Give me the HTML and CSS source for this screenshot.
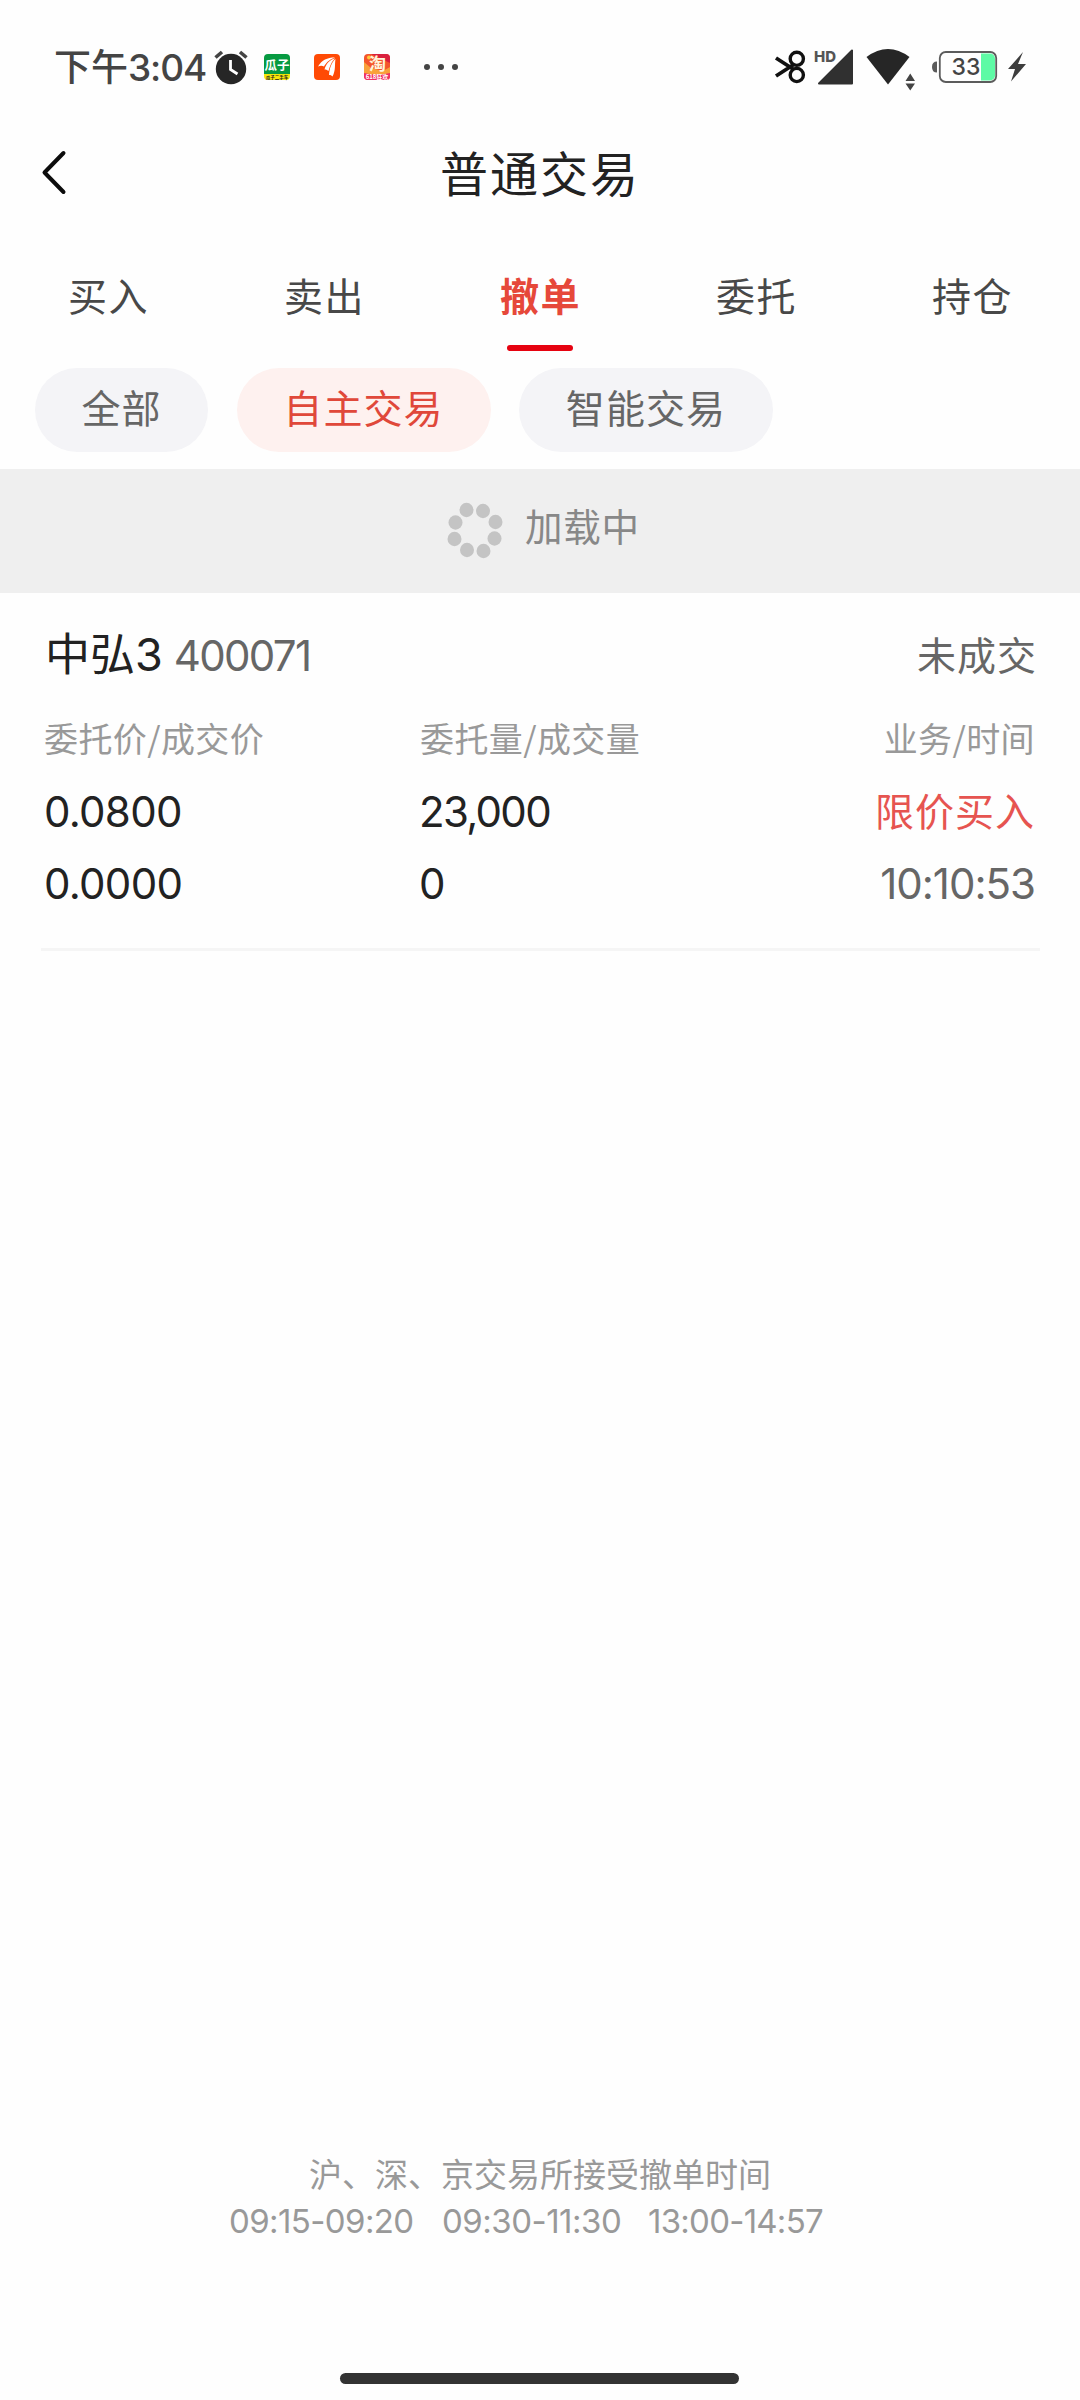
FILE: index.html
```html
<!DOCTYPE html>
<html lang="zh-CN">
<head>
<meta charset="utf-8">
<title>普通交易</title>
<link rel="stylesheet" href="styles.css">
</head>
<body>
<div class="screen">
  <div class="status">
    <div class="status-left">
      <span class="clock">下午<span class="clock-num">3:04</span></span>
      <svg class="alarm" width="34" height="34" viewBox="0 0 34 34"><circle cx="17" cy="19" r="15.2" fill="#262626"/><path d="M1.500 7.500L8 2M26 2l6.500 5.500" stroke="#444" stroke-width="3.600" fill="none"/><path d="M16.500 10v9.500l7 4.500" stroke="#fff" stroke-width="2.800" fill="none"/></svg>
      <svg class="app" width="26" height="26" viewBox="0 0 26 26"><defs><clipPath id="tile"><rect width="26" height="26" rx="4"/></clipPath></defs><g clip-path="url(#tile)"><path fill="#069a41" d="M0 0h26v20H0z"/><path fill="#f6e60a" d="M0 20h26v6H0z"/></g><text x="13" y="15.500" class="tile-text" font-size="12.500" fill="#fff">瓜子</text><text x="13" y="25" class="tile-text" font-size="4.500" fill="#222">瓜子二手车</text></svg>
      <svg class="app" width="26" height="26" viewBox="0 0 26 26"><rect width="26" height="26" rx="4" fill="#ff4a05"/><path fill="#fff" d="M4 12.500C8 6 13 3.500 21 3.500 14 6 12 9.500 10 12.500c-1.500-1-4-1-6 0zM10.500 15.500C12 10 15 6 21.200 4.200 17 8.500 16 12 14.500 17c-1-1-2.500-1.600-4-1.500zM15 21c.5-6 2-12 6.500-16C20.500 11 22 16 18.500 22.500c-.5-1-2-1.600-3.500-1.500z"/></svg>
      <svg class="app" width="26" height="26" viewBox="0 0 26 26"><g clip-path="url(#tile)"><path fill="#f4552c" d="M0 0h26v26H0z"/><path fill="#d9203e" d="M7 0h19v9z"/><path fill="#f9a13a" d="M0 8l7 6 12 3 7-4v8H0z"/><path fill="#f02f62" d="M0 19q13 3 26 0v7H0z"/><circle cx="5" cy="3.500" r="2" fill="#ffc93c"/></g><text x="13.500" y="16" class="tile-text" font-size="17" fill="#fff4dc">淘</text><text x="13" y="25" class="tile-text" font-size="6" fill="#fff">618狂欢</text></svg>
      <svg class="more" width="34" height="6" viewBox="0 0 34 6"><g fill="#444"><circle cx="3" cy="3" r="3"/><circle cx="17" cy="3" r="3"/><circle cx="31" cy="3" r="3"/></g></svg>
    </div>
    <div class="status-right">
      <svg width="30" height="34" viewBox="0 0 30 34"><g stroke="#111" fill="none"><circle cx="20.800" cy="8.800" r="6.600" stroke-width="3.400"/><circle cx="20.800" cy="25" r="6.600" stroke-width="3.400"/><path d="M0 8l17 11M0 26l17-11" stroke-width="3.800"/></g></svg>
      <svg class="signal" width="40" height="36" viewBox="0 0 40 36"><path d="M38 1.500v33H5z" fill="#303030" stroke="#303030" stroke-width="2" stroke-linejoin="round"/><text x="0" y="12.500" class="hd">HD</text></svg>
      <svg class="wifi" width="50" height="44" viewBox="0 0 50 44"><path d="M.500 9Q22 -7 43.500 9L22 36.500z" fill="#262626"/><path d="M39.500 33h9.500l-4.750-7.500zM39.500 35.500h9.500l-4.750 7z" fill="#444"/></svg>
      <svg class="battery" width="66" height="32" viewBox="0 0 66 32"><path d="M5 10.500v11q-5 0-5-5.500t5-5.500z" fill="#5a5a5a"/><path d="M49 2.500h9a5 5 0 0 1 5 5v17a5 5 0 0 1-5 5h-9z" fill="#5efaa5"/><rect x="7.800" y="1" width="56.400" height="30" rx="6" fill="none" stroke="#5c5c5c" stroke-width="1.800"/><text x="34" y="24" class="level">33</text></svg>
      <svg class="bolt" width="20" height="30" viewBox="0 0 20 30"><path d="M16 0L1 17h7L4 29.500 19 12h-8z" fill="#3d3d3d"/></svg>
    </div>
  </div>

  <header class="header">
    <svg class="back" width="26" height="46" viewBox="0 0 26 46"><path d="M22.500 3L3.500 22.500 22.500 42" fill="none" stroke="#0c0c0c" stroke-width="4" stroke-linecap="round" stroke-linejoin="round"/></svg>
    <h1 class="title">普通交易</h1>
  </header>

  <nav class="tabs">
    <a class="tab">买入</a>
    <a class="tab">卖出</a>
    <a class="tab tab-active">撤单</a>
    <a class="tab">委托</a>
    <a class="tab">持仓</a>
  </nav>

  <div class="chips">
    <span class="chip chip-small">全部</span>
    <span class="chip chip-active">自主交易</span>
    <span class="chip">智能交易</span>
  </div>

  <div class="loading">
    <svg width="56" height="60" viewBox="0 0 56 60"><g fill="#c4c4c4"><ellipse cx="19.500" cy="9" rx="7" ry="7.200"/><ellipse cx="36" cy="10" rx="7" ry="7.200"/><ellipse cx="48.500" cy="21" rx="7" ry="7.200"/><ellipse cx="47.500" cy="37.500" rx="7" ry="7.200"/><ellipse cx="36.500" cy="50" rx="7" ry="7.200"/><ellipse cx="20" cy="49" rx="7" ry="7.200"/><ellipse cx="7.500" cy="38" rx="7" ry="7.200"/><ellipse cx="8.500" cy="21.500" rx="7" ry="7.200"/></g></svg>
    <span class="loading-text">加载中</span>
  </div>

  <main class="orders">
    <article class="order">
      <div class="order-head">
        <div class="stock"><span class="stock-name">中弘<span class="name-num">3</span></span><span class="num code">400071</span></div>
        <span class="state">未成交</span>
      </div>
      <div class="grid">
        <span class="label">委托价/成交价</span><span class="label">委托量/成交量</span><span class="label">业务/时间</span>
        <span class="num">0.0800</span><span class="num qty">23,000</span><span class="side">限价买入</span>
        <span class="num">0.0000</span><span class="num qty">0</span><span class="num time">10:10:53</span>
      </div>
    </article>
  </main>

  <footer class="notice">
    <p class="notice-title">沪、深、京交易所接受撤单时间</p>
    <p class="hours"><span>09:15-09:20</span><span class="hours-mid">09:30-11:30</span><span class="hours-last">13:00-14:57</span></p>
  </footer>
  <div class="home-bar"></div>
</div>
</body>
</html>
```
FILE: styles.css
```css
* { box-sizing: border-box; }
body {
  margin: 0;
  background: #fefefe;
  color: #222;
  font-family: "Noto Sans CJK SC", sans-serif;
}
svg { overflow: visible; flex: none; }
.screen {
  width: 1080px;
  height: 2400px;
  display: flex;
  flex-direction: column;
}

.status {
  height: 134px;
  padding: 0 53px 0 54px;
  display: flex;
  align-items: center;
  justify-content: space-between;
}
.status-left, .status-right { display: flex; align-items: center; }
.clock { font-size: 37px; font-weight: 500; line-height: 60px; color: #444; white-space: nowrap; width: 159px; margin-top: -2px; }
.clock-num { font-family: Inter, sans-serif; letter-spacing: -1.1px; }
.alarm { margin-left: 1px; }
.app { margin-left: 24px; }
.alarm + .app { margin-left: 16px; }
.more { margin-left: 34px; }
.tile-text { font-family: "Noto Sans CJK SC", sans-serif; font-weight: 700; text-anchor: middle; }
.signal { margin-left: 8px; }
.hd { font: 800 15px Inter, sans-serif; fill: #555; }
.wifi { margin: 6px 0 0 12px; }
.battery { margin-left: 16px; }
.level { font: 500 23px Inter, sans-serif; fill: #444; text-anchor: middle; }
.bolt { margin-left: 9px; }

.header {
  height: 78px;
  padding: 0 41px;
  display: grid;
  grid-template-columns: 26px 1fr 26px;
  align-items: center;
}
.title {
  margin: 0;
  text-align: center;
  font-size: 48px;
  font-weight: 400;
  line-height: 72px;
  letter-spacing: 2px;
  margin-top: -5px;
}

.tabs { height: 156px; display: grid; grid-template-columns: repeat(5, 1fr); }
.tab {
  display: flex;
  flex-direction: column;
  align-items: center;
  padding-top: 52px;
  font-size: 39px;
  line-height: 60px;
  letter-spacing: 1.4px;
  text-indent: 1px;
  color: #484848;
}
.tab-active { color: #e6483a; font-weight: 700; }
.tab-active::after {
  content: "";
  width: 66px;
  height: 6px;
  margin-top: 21px;
  border-radius: 3px;
  background: #e60210;
}

.chips { height: 101px; padding: 0 35px; display: flex; gap: 28.5px; align-items: flex-start; }
.chip {
  width: 254px;
  height: 84px;
  border-radius: 42px;
  background: #f4f4f7;
  color: #666;
  font-size: 39px;
  line-height: 77px;
  letter-spacing: 1.1px;
  text-align: center;
}
.chip-small { width: 173px; }
.chip-active { background: #fef1ef; color: #e0483a; }

.loading { height: 124px; background: #efefef; display: flex; align-items: center; padding-left: 447px; }
.loading-text { margin: -12px 0 0 22px; font-size: 37.5px; line-height: 60px; letter-spacing: 0.8px; color: #888; }

.orders { padding: 0 40px 0 41px; flex: 1; }
.order { height: 358px; padding: 24px 5px 0 3px; border-bottom: 3px solid #f5f5f5; }
.order-head { height: 76px; display: flex; justify-content: space-between; margin-right: -2px; }
.stock { display: flex; align-items: center; height: 78px; }
.stock-name { font-size: 45px; line-height: 70px; margin: -5px 0 0 1px; }
.name-num { font-family: Inter, sans-serif; }
.num { font-family: Inter, sans-serif; font-size: 42px; line-height: 72px; letter-spacing: -0.7px; white-space: nowrap; }
.code { margin-left: 11px; color: #666; letter-spacing: -1.7px; }
.qty { letter-spacing: -1.7px; margin-left: -1px; }
.state { font-size: 39px; line-height: 72px; letter-spacing: 1px; color: #666; }
.grid {
  display: grid;
  grid-template-columns: 376px 1fr auto;
  grid-template-rows: 73px 72px 72px;
  padding-top: 10px;
}
.grid > :nth-child(3n) { text-align: right; }
.label { font-size: 34px; line-height: 69px; letter-spacing: 0.4px; color: #999; }
.side { font-size: 39px; line-height: 66px; letter-spacing: 1px; color: #e65450; }
.time { color: #666; letter-spacing: -1px; }

.notice { height: 224px; text-align: center; color: #999; }
.notice p { margin: 0; }
.notice-title { font-size: 33px; line-height: 48px; }
.hours { display: flex; padding-left: 229px; font-family: Inter, sans-serif; font-size: 33px; line-height: 48px; letter-spacing: -0.6px; white-space: nowrap; }
.hours span { width: 213px; text-align: left; }
.hours .hours-mid { width: 206px; letter-spacing: -0.5px; }
.hours .hours-last { letter-spacing: -0.75px; }
.home-bar { width: 399px; height: 11px; margin: 0 0 16px 340px; border-radius: 6px; background: #333; }
```
